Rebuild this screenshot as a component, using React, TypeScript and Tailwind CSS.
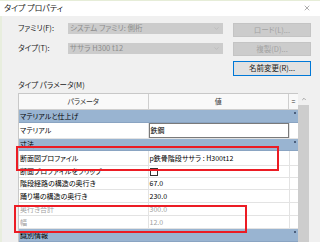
import { ChevronDown, ChevronUp, X } from 'lucide-react';

type Row =
  | { kind: 'group'; label: string; h: string }
  | { kind: 'param'; label: string; value?: string; h: string; dim?: boolean; edit?: boolean; check?: boolean };

const rows: Row[] = [
  { kind: 'group', label: 'マテリアルと仕上げ', h: 'h-[13px]' },
  { kind: 'param', label: 'マテリアル', value: '鉄鋼', h: 'h-[16px]', edit: true },
  { kind: 'group', label: '寸法', h: 'h-[12px]' },
  { kind: 'param', label: '断面図プロファイル', value: 'p鉄骨階段ササラ : H300t12', h: 'h-[15px]' },
  { kind: 'param', label: '断面プロファイルをフリップ', h: 'h-[12px]', check: true },
  { kind: 'param', label: '階段経路の構造の奥行き', value: '67.0', h: 'h-[12px]' },
  { kind: 'param', label: '踊り場の構造の奥行き', value: '230.0', h: 'h-[13px]' },
  { kind: 'param', label: '奥行き合計', value: '300.0', h: 'h-[13px]', dim: true },
  { kind: 'param', label: '幅', value: '12.0', h: 'h-[13px]', dim: true },
  { kind: 'group', label: '識別情報', h: 'h-[13px]' },
];

function Combo({ text }: { text: string }) {
  return (
    <div className="flex h-[11px] w-[155px] items-center justify-between bg-[#cccccc] pl-[2px] pr-[3px] text-[#8c8c8c]">
      <span>{text}</span>
      <ChevronDown className="h-[7px] w-[7px] text-[#a8a8a8]" strokeWidth={1.5} />
    </div>
  );
}

function Btn({ text, enabled }: { text: string; enabled?: boolean }) {
  return (
    <div
      className={
        enabled
          ? 'flex h-[15px] w-[78px] items-center justify-center border border-[#0078d7] bg-[#e1e1e1] text-[#1a1a1a]'
          : 'flex h-[14px] w-[78px] items-center justify-center border border-[#c4c4c4] bg-[#cccccc] text-[#a3a3a3]'
      }
    >
      {text}
    </div>
  );
}

function TableRow({ row }: { row: Row }) {
  if (row.kind === 'group') {
    return (
      <div className={`relative flex ${row.h} items-center border-b border-[#8aa4c2] bg-[#99b4d1] pl-[1px] text-black`}>
        {row.label}
        <span className="absolute right-[2px] top-[2px] h-[2px] w-[2px] bg-[#4c5f7c]" />
      </div>
    );
  }
  const tone = row.dim ? 'text-[#a0a0a0]' : 'text-black';
  return (
    <div className={`flex ${row.h} border-b border-[#e3e3e3] bg-white`}>
      <div className={`flex w-[130px] items-center border-r border-[#e3e3e3] pl-[1px] ${tone}`}>{row.label}</div>
      <div className={`flex w-[141px] items-center ${tone}`}>
        {row.edit ? (
          <div className="flex h-full w-full items-center border border-[#7a7a7a] pl-[1px]">{row.value}</div>
        ) : row.check ? (
          <span className="ml-[1px] h-[8px] w-[8px] border border-[#333333] bg-white" />
        ) : (
          <span className="pl-[1px]">{row.value}</span>
        )}
      </div>
      <div className="w-[9px] border-l border-[#e3e3e3]" />
    </div>
  );
}

export default function App() {
  return (
    <div className="relative flex h-[242px] w-[320px] flex-col overflow-hidden bg-[#f0f0f0] text-[7.5px] leading-none [font-family:'Noto_Sans_CJK_JP',sans-serif] [font-feature-settings:'palt']">
      <div className="flex h-[20px] items-center justify-between border-t border-[#e6edd8] bg-white pl-[4px] pr-[9px] text-[8px] text-[#222222]">
        <span>タイプ プロパティ</span>
        <X className="h-[8px] w-[8px] text-[#333333]" strokeWidth={1.2} />
      </div>

      <div className="flex flex-1 flex-col border-l-[2px] border-[#e8eede] pl-[16px]">
        <div className="mt-[7px] flex">
          <div className="flex w-[205px] flex-col gap-[9px]">
            <div className="flex h-[11px] items-center">
              <span className="w-[50px] text-[#222222]">ファミリ(F):</span>
              <Combo text="システム ファミリ: 側桁" />
            </div>
            <div className="flex h-[11px] items-center">
              <span className="w-[50px] text-[#222222]">タイプ(T):</span>
              <Combo text="ササラ H300 t12" />
            </div>
          </div>
          <div className="ml-[10px] flex flex-col gap-[5px]">
            <Btn text="ロード(L)..." />
            <Btn text="複製(D)..." />
            <Btn text="名前変更(R)..." enabled />
          </div>
        </div>

        <div className="mt-[5px] text-[#222222]">タイプ パラメータ(M)</div>

        <div className="mt-[5px] flex">
          <div className="flex w-[280px] flex-col border-l border-t border-[#c8c8c8] text-[7px]">
            <div className="flex h-[16px] border-b border-[#cfcfcf] bg-[#f9f9f9] text-[#333333]">
              <div className="flex w-[130px] items-center justify-center border-r border-[#cfcfcf]">パラメータ</div>
              <div className="flex w-[141px] items-center justify-center border-r border-[#cfcfcf]">値</div>
              <div className="flex w-[9px] items-center justify-center">=</div>
            </div>
            {rows.map((row) => (
              <TableRow key={row.label} row={row} />
            ))}
          </div>
          <div className="flex w-[11px] flex-col">
            <div className="flex h-[12px] items-center justify-center bg-[#f0f0f0]">
              <ChevronUp className="h-[6px] w-[6px] text-[#606060]" strokeWidth={2} />
            </div>
            <div className="flex-1 bg-[#cdcdcd]" />
          </div>
        </div>
      </div>

      <div className="absolute left-[16px] top-[146px] h-[25px] w-[263px] border-[2px] border-[#ec1c24]" />
      <div className="absolute left-[14px] top-[205px] h-[28px] w-[233px] border-[2px] border-[#ec1c24]" />
    </div>
  );
}
